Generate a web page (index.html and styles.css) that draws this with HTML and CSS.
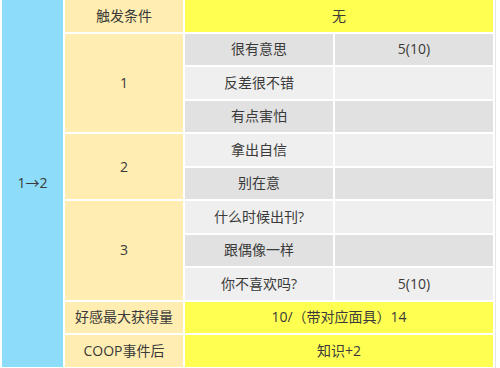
FILE: index.html
```html
<!DOCTYPE html>
<html lang="zh">
<head>
<meta charset="utf-8">
<link rel="stylesheet" href="styles.css">
</head>
<body>
<div class="frame">
  <div class="grid">
    <div class="cell blue stage">1→2</div>
    <div class="cell pale">触发条件</div>
    <div class="cell yellow span2">无</div>

    <div class="cell pale rs3">1</div>
    <div class="cell dark">很有意思</div>
    <div class="cell dark">5(10)</div>
    <div class="cell light">反差很不错</div>
    <div class="cell light"></div>
    <div class="cell dark">有点害怕</div>
    <div class="cell dark"></div>

    <div class="cell pale rs2">2</div>
    <div class="cell light">拿出自信</div>
    <div class="cell light"></div>
    <div class="cell dark">别在意</div>
    <div class="cell dark"></div>

    <div class="cell pale rs3">3</div>
    <div class="cell light">什么时候出刊?</div>
    <div class="cell light"></div>
    <div class="cell dark">跟偶像一样</div>
    <div class="cell dark"></div>
    <div class="cell light">你不喜欢吗?</div>
    <div class="cell light">5(10)</div>

    <div class="cell pale">好感最大获得量</div>
    <div class="cell yellow span2">10/（带对应面具）14</div>
    <div class="cell pale">COOP事件后</div>
    <div class="cell yellow span2">知识+2</div>
  </div>
</div>
</body>
</html>
```

FILE: styles.css
```css
html, body {
  margin: 0;
  padding: 0;
  background: #ffffff;
}
body {
  font-family: "Open Sans", "Noto Sans CJK SC", sans-serif;
  font-size: 14px;
  color: #3a3a3a;
}
.frame {
  width: 496px;
  height: 368px;
  border-right: 1px solid #e6e6e6;
  box-sizing: border-box;
  padding-left: 2px;
}
.grid {
  display: grid;
  grid-template-columns: 61px 118px 148px 158px;
  grid-template-rows: repeat(11, 31.5px);
  gap: 2px;
}
.cell {
  display: flex;
  align-items: center;
  justify-content: center;
  white-space: nowrap;
  line-height: 1;
}
.stage { grid-row: 1 / span 11; }
.span2 { grid-column: span 2; }
.rs3 { grid-row: span 3; }
.rs2 { grid-row: span 2; }
.blue { background: #8ddcf9; }
.pale { background: #ffedb1; }
.yellow { background: #ffff52; }
.dark { background: #e1e1e1; }
.light { background: #efefef; }
```
